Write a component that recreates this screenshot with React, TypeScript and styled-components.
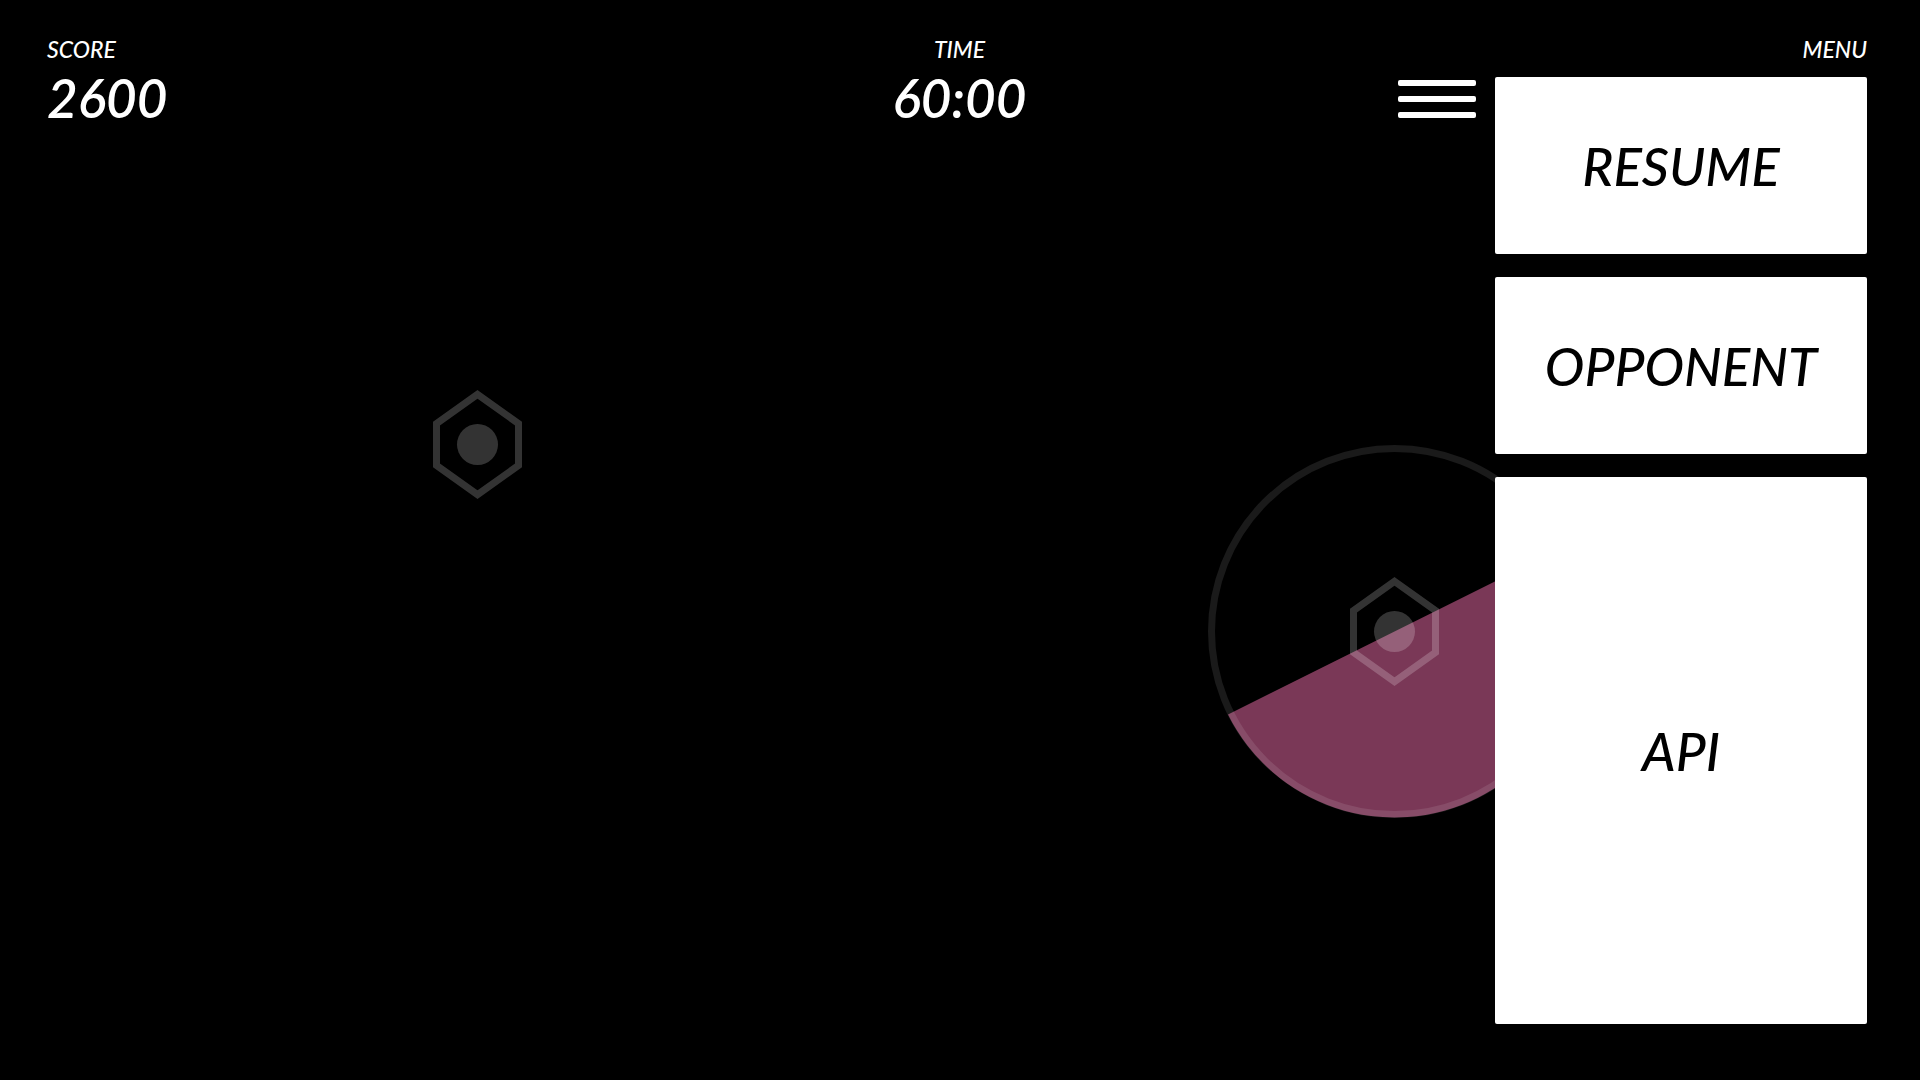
import React from "react";
import styled, { createGlobalStyle } from "styled-components";

const GlobalStyle = createGlobalStyle`
  *, *::before, *::after { box-sizing: border-box; }
  body { margin: 0; background: #000; }
`;

const Screen = styled.main`
  position: relative;
  display: grid;
  grid-template-columns: 1fr auto 1fr;
  min-height: 100vh;
  padding: 36px 48px 56px 47px;
  overflow: hidden;
  background: #000;
  color: #fff;
  font-family: Lato, "Open Sans", sans-serif;
  font-style: italic;
  font-weight: 500;
`;

const Stat = styled.section<{ $align: "left" | "center" }>`
  position: relative;
  display: flex;
  flex-direction: column;
  gap: 4px;
  text-align: ${(p) => p.$align};
`;

const Label = styled.h2`
  margin: 0;
  font-size: 23px;
  line-height: 26px;
  font-weight: inherit;
`;

const Value = styled.p`
  margin: 0;
  font-size: 53px;
  line-height: 64px;
  font-weight: 600;
`;

const MenuArea = styled.nav`
  position: relative;
  display: flex;
  flex-direction: column;
  align-items: flex-end;
  gap: 15px;
  padding-right: 5px;
`;

const MenuBody = styled.div`
  display: flex;
  flex: 1;
  align-items: stretch;
  gap: 19px;
`;

const MenuToggle = styled.button`
  display: flex;
  flex-direction: column;
  align-self: flex-start;
  gap: 10px;
  width: 78px;
  padding: 3px 0;
  border: 0;
  background: none;
  cursor: pointer;
`;

const Bar = styled.span`
  display: block;
  width: 100%;
  height: 6px;
  border-radius: 2px;
  background: #fff;
`;

const MenuList = styled.div`
  display: grid;
  grid-template-rows: 177fr 177fr 547fr;
  gap: 23px;
  width: 372px;
`;

const MenuItem = styled.button`
  display: flex;
  align-items: center;
  justify-content: center;
  padding: 0;
  border: 0;
  border-radius: 2px;
  background: #fff;
  color: #000;
  font: inherit;
  font-size: 53px;
  line-height: 64px;
  cursor: pointer;
`;

const Field = styled.div`
  position: absolute;
  inset: 0;
`;

const Piece = styled.svg<{ $x: number; $y: number }>`
  position: absolute;
  left: ${(p) => p.$x}px;
  top: ${(p) => p.$y}px;
  transform: translate(-50%, -50%);
`;

function HexMark() {
  return (
    <g opacity="0.2">
      <polygon
        points="0,-50.1 41,-20.9 41,20.9 0,50.1 -41,20.9 -41,-20.9"
        fill="none"
        stroke="#fff"
        strokeWidth="7"
      />
      <circle r="20.5" fill="#fff" />
    </g>
  );
}

export default function App() {
  return (
    <>
      <GlobalStyle />
      <Screen>
        <Field aria-hidden="true">
          <Piece $x={477} $y={444} width="120" height="120" viewBox="-60.5 -60.5 120 120">
            <HexMark />
          </Piece>
          <Piece $x={1394} $y={631} width="380" height="380" viewBox="-190.5 -190.5 380 380">
            <path d="M-166.5,83 A186,186 0 0 0 166.5,-83 Z" fill="#7a3857" />
            <circle r="183" fill="none" stroke="#fff" strokeOpacity="0.1" strokeWidth="7" />
            <HexMark />
          </Piece>
        </Field>

        <Stat $align="left">
          <Label>SCORE</Label>
          <Value>2600</Value>
        </Stat>

        <Stat $align="center">
          <Label>TIME</Label>
          <Value>60:00</Value>
        </Stat>

        <MenuArea aria-label="Menu">
          <Label>MENU</Label>
          <MenuBody>
            <MenuToggle type="button" aria-label="Toggle menu">
              <Bar />
              <Bar />
              <Bar />
            </MenuToggle>
            <MenuList>
              <MenuItem type="button">RESUME</MenuItem>
              <MenuItem type="button">OPPONENT</MenuItem>
              <MenuItem type="button">API</MenuItem>
            </MenuList>
          </MenuBody>
        </MenuArea>
      </Screen>
    </>
  );
}
